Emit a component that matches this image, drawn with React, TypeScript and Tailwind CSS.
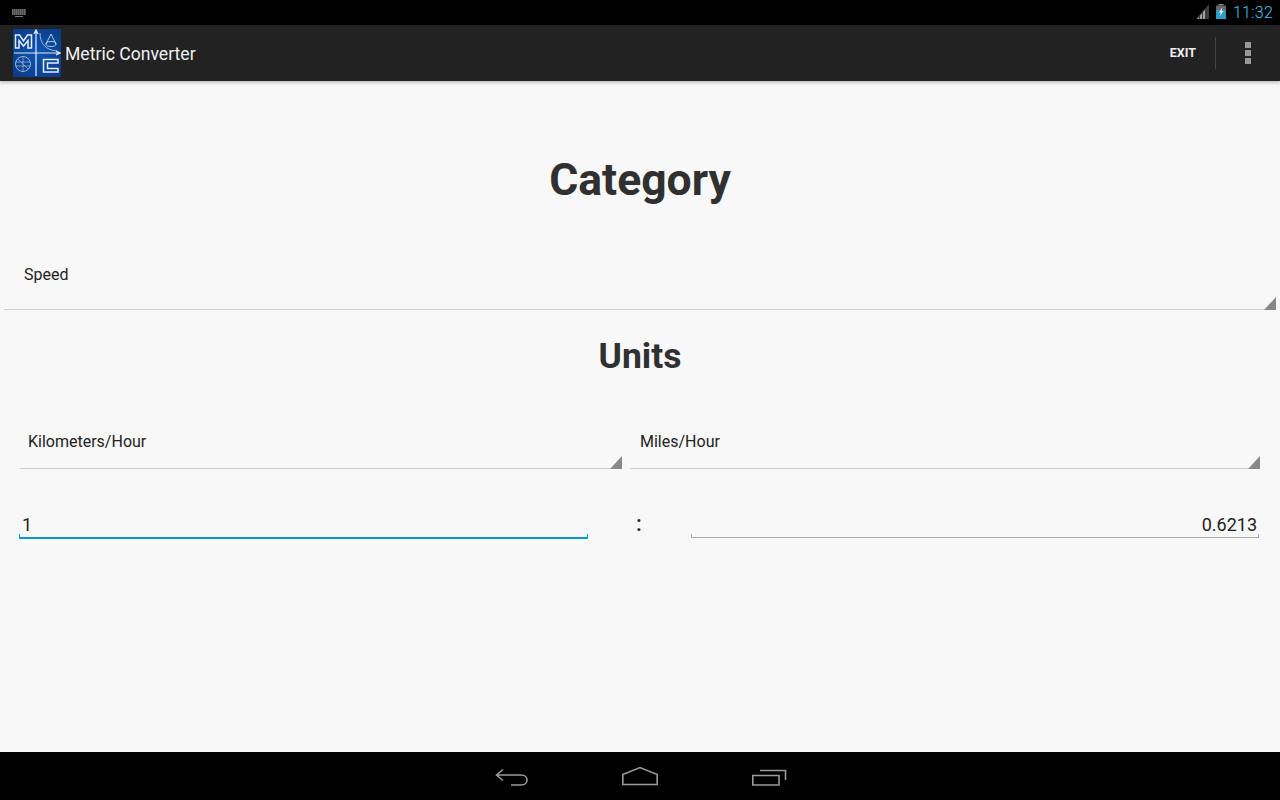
const font = { fontFamily: "Roboto, sans-serif" };

function Logo() {
  return (
    <svg width="48" height="48" viewBox="0 0 48 48" className="shrink-0">
      <defs>
        <radialGradient id="lg" cx="50%" cy="50%" r="70%">
          <stop offset="0%" stopColor="#0d55b0" />
          <stop offset="100%" stopColor="#0a3a86" />
        </radialGradient>
      </defs>
      <rect width="48" height="48" fill="url(#lg)" />
      <g fill="none" stroke="#e4ecf8" strokeWidth="1">
        <path d="M2.500 19V6H6.500L10.500 12L14.500 6H18.500V19H15V11.500L10.500 17L6 11.500V19Z" strokeWidth="1.500" />
        <path d="M1 24H46M43 22L47 24L43 26" strokeWidth="1.200" />
        <path d="M23 1V47M21 5L23 1L25 5" strokeWidth="1.200" />
        <path d="M27 4C27 14 32 21 44 22" strokeOpacity="0.650" />
        <path d="M38 5L33 15M38 5L43 15M33 15A5 2.500 0 0 0 43 15A5 2.500 0 0 0 33 15" strokeOpacity="0.750" />
        <circle cx="10" cy="35" r="7.500" strokeOpacity="0.650" />
        <path d="M3 33H17M3 37H17M10 27.500V42.500M5 30L15 40" strokeOpacity="0.450" />
        <path d="M45 30.500H30.500V43H45V39.500H34.500V34H45Z" strokeWidth="1.500" />
      </g>
    </svg>
  );
}

function Spinner({ label, textClass, lineClass }: { label: string; textClass: string; lineClass: string }) {
  return (
    <div className={`relative flex border-b border-[#d0d0d0] pt-[1px] ${lineClass}`}>
      <span className={`text-[16px] leading-[20px] text-[#222] ${textClass}`}>{label}</span>
      <svg width="12" height="13" viewBox="0 0 12 13" className="absolute right-0 bottom-[-1px]">
        <path d="M12 0V13H0Z" fill="#888" />
      </svg>
    </div>
  );
}

function Field({ value, right, active }: { value: string; right?: boolean; active?: boolean }) {
  return (
    <div className="relative flex-1 h-[27px]">
      <div className={`text-[18px] leading-[24px] pt-[1px] text-[#222] px-[3px] ${right ? "text-right pr-[2px]" : ""}`}>{value}</div>
      {active ? (
        <div className="absolute inset-x-0 bottom-0 h-[5px] border-x border-b-2 border-[#0099cc]" />
      ) : (
        <div className="absolute inset-x-0 bottom-[1px] h-[4px] border-x border-b border-[#aaa]" />
      )}
    </div>
  );
}

export default function App() {
  return (
    <div className="w-[1280px] h-[800px] flex flex-col overflow-hidden bg-[#f8f8f8]" style={font}>
      <div className="h-[25px] bg-black flex items-center justify-between shrink-0 pl-[12px] pr-[7px]">
        <svg width="14" height="8" viewBox="0 0 14 8" className="mt-[1px]">
          <rect width="14" height="6" fill="#4a4a4a" />
          <path d="M0 1H14M0 3H14M0 5H14" stroke="#8a8a8a" strokeDasharray="1 1" />
          <rect x="3" y="7" width="8" height="1" fill="#777" />
        </svg>
        <div className="flex items-center">
          <svg width="13" height="15" viewBox="0 0 13 15" className="mr-[7px] mt-[-2px]">
            <path d="M0 15L13 0V15Z" fill="#3c3c3c" />
            <path d="M1 15L3 12.700V15ZM4 15V11.500L6 9.200V15ZM7 15V8L9 5.700V15Z" fill="#a0a0a0" />
          </svg>
          <svg width="10" height="15" viewBox="0 0 10 15" className="mr-[7px] mt-[-2px]">
            <rect x="2.500" y="0" width="5" height="1.500" fill="#888" />
            <rect x="0" y="1.500" width="10" height="5" fill="#666" />
            <rect x="0" y="6" width="10" height="9" fill="#2f9cc6" />
            <path d="M6.500 3L3 8.500H5L3.500 12.500L7.500 7H5.500Z" fill="#fff" />
          </svg>
          <span className="text-[#45c4f2] text-[16px] font-light leading-[25px] tracking-[0.25px]">11:32</span>
        </div>
      </div>

      <div className="h-[56px] bg-[#222] flex items-center shrink-0 pl-[13px] shadow-[0_2px_3px_rgba(0,0,0,0.22)] z-10">
        <Logo />
        <span className="ml-[4px] pt-[2px] text-[17.6px] text-[#f0f0f0]">Metric Converter</span>
        <div className="ml-auto flex items-center h-full">
          <span className="text-[12.5px] font-bold text-[#eee]">EXIT</span>
          <div className="w-px h-[32px] bg-[#444] ml-[19px]" />
          <div className="flex flex-col gap-[2px] w-[6px] mx-[29px]">
            <div className="w-[6px] h-[6px] bg-[#999]" />
            <div className="w-[6px] h-[6px] bg-[#999]" />
            <div className="w-[6px] h-[6px] bg-[#999]" />
          </div>
        </div>
      </div>

      <div className="flex-1 flex flex-col">
        <h1 className="mt-[70px] text-center text-[44.5px] leading-[58px] font-bold text-[#303030]">Category</h1>
        <div className="mx-[4px] mt-[55px]">
          <Spinner label="Speed" textClass="pl-[20px]" lineClass="pb-[24px]" />
        </div>
        <h2 className="mt-[23px] text-center text-[35.5px] leading-[46px] font-bold text-[#303030]">Units</h2>
        <div className="flex mt-[52px] pl-[20px] pr-[20px] gap-[8px]">
          <div className="w-[602px]">
            <Spinner label="Kilometers/Hour" textClass="pl-[8px]" lineClass="pb-[16px]" />
          </div>
          <div className="flex-1">
            <Spinner label="Miles/Hour" textClass="pl-[10px]" lineClass="pb-[16px]" />
          </div>
        </div>
        <div className="flex items-start mt-[43px] pl-[19px] pr-[21px]">
          <Field value="1" active />
          <div className="w-[103px] text-center text-[22px] leading-[24px] font-medium text-[#222]">:</div>
          <Field value="0.6213" right />
        </div>
      </div>

      <div className="h-[48px] bg-black flex items-center justify-center shrink-0 gap-[93px] pl-[2px]">
        <svg width="34" height="20" viewBox="0 0 34 20" fill="none" stroke="#999" strokeWidth="1.600">
          <path d="M8 3.500L1.500 9L8 14.500M2 9H26C34 9 34 19 26 19H16" />
        </svg>
        <svg width="36" height="20" viewBox="0 0 36 20" fill="none" stroke="#999" strokeWidth="1.600">
          <path d="M0.800 8.500L18 1.500L35.200 8.500V18.500H0.800Z" />
        </svg>
        <svg width="35" height="20" viewBox="0 0 35 20" fill="none" stroke="#999" strokeWidth="1.600" className="ml-[1px]">
          <path d="M0.800 9.500H27V19H0.800ZM8 4.500H33.500V14" />
        </svg>
      </div>
    </div>
  );
}
